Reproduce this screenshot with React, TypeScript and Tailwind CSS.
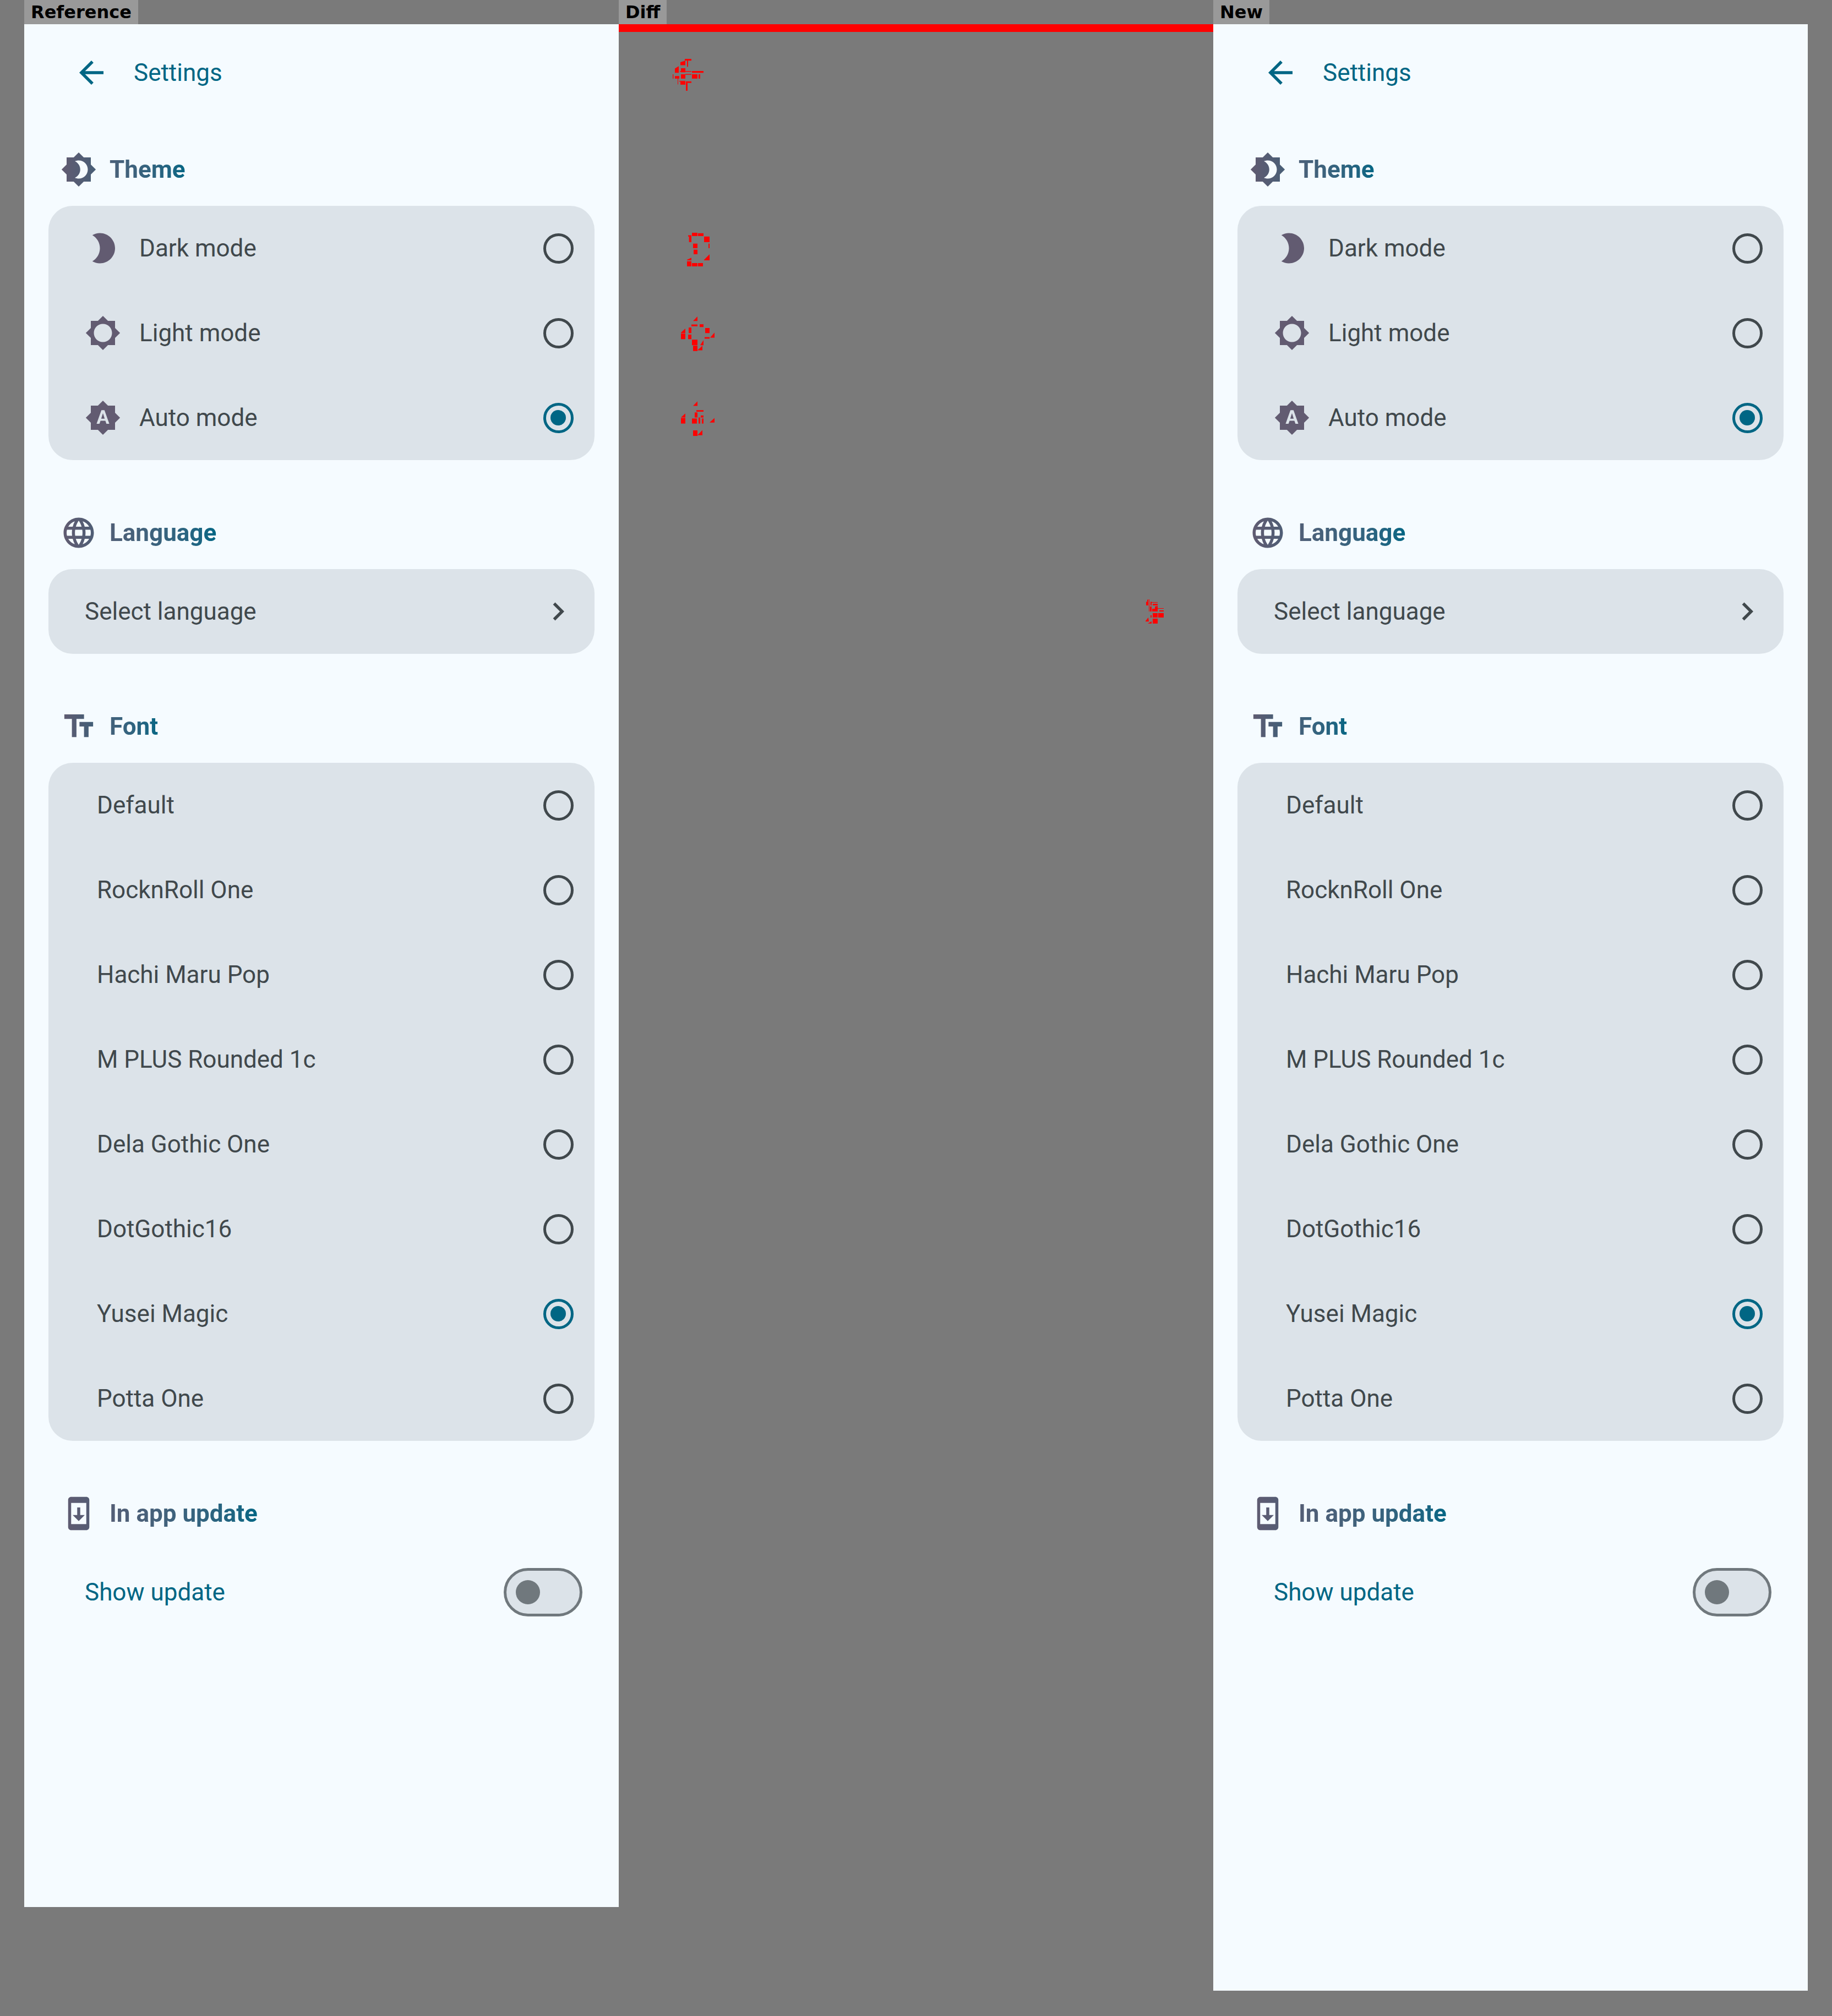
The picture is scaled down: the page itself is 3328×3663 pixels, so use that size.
import React from "react";

const P = {
  b4: "M20 8.69V4h-4.69L12 .69 8.69 4H4v4.69L.69 12 4 15.31V20h4.69L12 23.31 15.31 20H20v-4.69L23.31 12 20 8.69zM12 18c-.89 0-1.74-.2-2.5-.55C11.56 16.5 13 14.42 13 12s-1.44-4.5-3.5-5.45C10.26 6.2 11.11 6 12 6c3.31 0 6 2.69 6 6s-2.69 6-6 6z",
  b2: "M10 2c-1.82 0-3.53.5-5 1.35C7.99 5.08 10 8.3 10 12s-2.01 6.92-5 8.65C6.47 21.5 8.18 22 10 22c5.52 0 10-4.48 10-10S15.52 2 10 2z",
  b5: "M20 15.31L23.31 12 20 8.69V4h-4.69L12 .69 8.69 4H4v4.69L.69 12 4 15.31V20h4.69L12 23.31 15.31 20H20v-4.69zM12 18c-3.31 0-6-2.69-6-6s2.69-6 6-6 6 2.69 6 6-2.69 6-6 6z",
  auto: "M10.85 12.65h2.3L12 9l-1.15 3.65zM20 8.69V4h-4.69L12 .69 8.69 4H4v4.69L.69 12 4 15.31V20h4.69L12 23.31 15.31 20H20v-4.69L23.31 12 20 8.69zM14.3 16l-.7-2h-3.2l-.7 2H7.8L11 7h2l3.2 9h-1.9z",
  globe: "M11.99 2C6.47 2 2 6.48 2 12s4.47 10 9.99 10C17.52 22 22 17.52 22 12S17.52 2 11.99 2zm6.93 6h-2.95c-.32-1.25-.78-2.45-1.38-3.56 1.84.63 3.37 1.91 4.33 3.56zM12 4.04c.83 1.2 1.48 2.53 1.91 3.96h-3.82c.43-1.43 1.08-2.76 1.91-3.96zM4.26 14C4.1 13.36 4 12.69 4 12s.1-1.36.26-2h3.38c-.08.66-.14 1.32-.14 2 0 .68.06 1.34.14 2H4.26zm.82 2h2.95c.32 1.25.78 2.45 1.38 3.56-1.84-.63-3.37-1.9-4.33-3.56zm2.95-8H5.08c.96-1.66 2.49-2.93 4.33-3.56C8.81 5.55 8.35 6.75 8.03 8zM12 19.96c-.83-1.2-1.48-2.53-1.91-3.96h3.82c-.43 1.43-1.08 2.76-1.91 3.96zM14.34 14H9.66c-.09-.66-.16-1.32-.16-2 0-.68.07-1.35.16-2h4.68c.09.65.16 1.32.16 2 0 .68-.07 1.34-.16 2zm.25 5.56c.6-1.11 1.06-2.31 1.38-3.56h2.95c-.96 1.65-2.49 2.93-4.33 3.56zM16.36 14c.08-.66.14-1.32.14-2 0-.68-.06-1.34-.14-2h3.38c.16.64.26 1.31.26 2s-.1 1.36-.26 2h-3.38z",
  tt: "M2.5 4v3h5v12h3V7h5V4h-13zm19 5h-9v3h3v7h3v-7h3V9z",
  sys: "M17 1.01L7 1c-1.1 0-2 .9-2 2v18c0 1.1.9 2 2 2h10c1.1 0 2-.9 2-2V3c0-1.1-.9-1.99-2-1.99zM17 19H7V5h10v14zm-1-6h-3V8h-2v5H8l4 4 4-4z",
  back: "M20 11H7.83l5.59-5.59L12 4l-8 8 8 8 1.41-1.41L7.83 13H20v-2z",
  chev: "M8.59 16.59 13.17 12 8.59 7.41 10 6l6 6-6 6-1.41-1.41z",
};

function Icon({ d, className }: { d: string; className: string }) {
  return (
    <svg viewBox="0 0 24 24" className={`w-[66px] h-[66px] shrink-0 fill-current ${className}`}>
      <path d={d} />
    </svg>
  );
}

function Radio({ on }: { on?: boolean }) {
  return on ? (
    <div className="w-[55px] h-[55px] rounded-full border-[5.5px] border-[#006684] flex items-center justify-center">
      <div className="w-[27.5px] h-[27.5px] rounded-full bg-[#006684]" />
    </div>
  ) : (
    <div className="w-[55px] h-[55px] rounded-full border-[5.5px] border-[#40484c]" />
  );
}

function Heading({ d, label, w, id }: { d: string; label: string; w: number; id: string }) {
  return (
    <div className="h-[132px] pl-[66px] flex items-center">
      <div className="flex items-center gap-[23px] w-fit bg-gradient-to-r from-[#625b71] to-[#006684] bg-clip-text text-transparent">
        <svg viewBox="0 0 24 24" className="w-[66px] h-[66px] shrink-0">
          <defs>
            <linearGradient id={id} gradientUnits="userSpaceOnUse" x1="0" y1="0" x2={(w / 66) * 24} y2="0">
              <stop offset="0" stopColor="#625b71" />
              <stop offset="1" stopColor="#006684" />
            </linearGradient>
          </defs>
          <path d={d} fill={`url(#${id})`} />
        </svg>
        <span className="text-[44px] leading-[66px] font-bold" >{label}</span>
      </div>
    </div>
  );
}

function Row({ icon, label, on }: { icon?: string; label: string; on?: boolean }) {
  return (
    <div className={`h-[154px] flex items-center pr-[38.5px] ${icon ? "pl-[66px]" : "pl-[88px]"}`}>
      {icon && <Icon d={icon} className="text-[#625b71] mr-[33px]" />}
      <span className="flex-1 text-[44px] leading-[66px] text-[#40484c]">{label}</span>
      <Radio on={on} />
    </div>
  );
}

const fonts = ["Default", "RocknRoll One", "Hachi Maru Pop", "M PLUS Rounded 1c", "Dela Gothic One", "DotGothic16", "Yusei Magic", "Potta One"];

function Panel({ h, pre }: { h: string; pre: string }) {
  return (
    <div className={`w-[1080px] bg-[#f5fbff] ${h}`} >
      <div className="h-[176px] flex items-center pl-[89px]">
        <Icon d={P.back} className="text-[#006684] mr-[44px]" />
        <span className="text-[44px] leading-[66px] text-[#006684]">Settings</span>
      </div>
      <div className="h-[22px]" />
      <Heading d={P.b4} label="Theme" w={240} id={`${pre}a`} />
      <div className="mx-[44px] rounded-[44px] bg-[#dce3e9]">
        <Row icon={P.b2} label="Dark mode" />
        <Row icon={P.b5} label="Light mode" />
        <Row icon={P.auto} label="Auto mode" on />
      </div>
      <div className="h-[66px]" />
      <Heading d={P.globe} label="Language" w={305} id={`${pre}b`} />
      <div className="mx-[44px] rounded-[44px] bg-[#dce3e9] h-[154px] flex items-center pl-[66px] pr-[33px]">
        <span className="flex-1 text-[44px] leading-[66px] text-[#40484c]">Select language</span>
        <Icon d={P.chev} className="text-[#40484c]" />
      </div>
      <div className="h-[66px]" />
      <Heading d={P.tt} label="Font" w={185} id={`${pre}c`} />
      <div className="mx-[44px] rounded-[44px] bg-[#dce3e9]">
        {fonts.map((f) => (
          <Row key={f} label={f} on={f === "Yusei Magic"} />
        ))}
      </div>
      <div className="h-[66px]" />
      <Heading d={P.sys} label="In app update" w={387} id={`${pre}d`} />
      <div className="mx-[44px] h-[154px] flex items-center pl-[66px] pr-[22px]">
        <span className="flex-1 text-[44px] leading-[66px] text-[#006684]">Show update</span>
        <div className="w-[143px] h-[88px] rounded-full border-[5.5px] border-[#70787d] bg-[#dce3e9] flex items-center pl-[16.5px]">
          <div className="w-[44px] h-[44px] rounded-full bg-[#70787d]" />
        </div>
      </div>
    </div>
  );
}

function Tab({ children }: { children: React.ReactNode }) {
  return (
    <div className="h-[44px] w-fit px-[12px] bg-[#999999] text-black font-bold text-[32px] leading-[44px] [font-family:'DejaVu_Sans',sans-serif]">
      {children}
    </div>
  );
}

type R = [number, number, number, number];
const blobRects: R[] = [
  [192,37,228,44],[204,44,210,68],[171,74,195,90],[165,85,228,88],[231,85,294,92],[126,98,130,115],[138,105,162,115],[171,98,195,115],[195,97,228,100],[231,98,261,115],[267,98,276,115],[153,115,156,138],[162,124,195,127],[168,127,195,139],[198,126,228,132],[198,132,207,163],
  [231,725,261,738],[264,727,294,738],[210,735,228,740],[215,740,228,762],[297,740,327,762],[237,768,261,786],[321,768,327,786],[240,792,261,810],[204,838,228,858],[231,845,261,858],[264,845,291,858],
  [228,1088,261,1095],[273,1087,294,1098],[213,1100,228,1122],[303,1102,327,1122],[171,1124,195,1146],[210,1128,228,1146],[231,1148,261,1170],[237,1172,261,1193],[300,1138,327,1144],
  [255,1427,294,1433],[246,1436,261,1456],[279,1448,294,1456],[231,1460,258,1480],[267,1456,276,1480],[285,1460,294,1480],[171,1458,195,1480],[237,1507,261,1529],
];
const blobTris: string[] = [
  "168,50 195,44 195,62 168,62","138,75 159,66 159,92 138,92","297,832 327,810 327,834 297,834","204,832 228,824 228,834 204,834",
  "237,1074 261,1056 261,1074","171,1120 195,1104 195,1122 171,1122","330,1140 354,1120 354,1140","276,1170 294,1150 294,1170 276,1170","261,1190 288,1172 288,1190",
  "237,1410 261,1392 261,1410","171,1456 195,1440 195,1456","327,1476 354,1458 354,1476","261,1526 288,1506 288,1526",
];
const chevRects: R[] = [
  [126,40,138,60],[141,27,144,93],[150,40,156,60],[156,42,189,45],[162,51,189,60],[147,66,156,93],[159,78,189,93],[189,75,222,78],[198,87,222,93],[162,102,189,126],[192,102,222,126],[150,114,156,126],[162,132,189,159],
];
const chevTris: string[] = ["132,30 138,27 138,40 132,40","174,66 189,63 189,78 174,78","123,145 138,126 141,148 123,148","135,159 156,147 156,159"];

function DiffPanel() {
  return (
    <div className="w-[1080px] relative">
      <div className="h-[14px] bg-[#ff0000]" />
      <svg viewBox="0 0 480 1568" preserveAspectRatio="none" className="absolute left-[56px] top-[46px] w-[160px] h-[720px] fill-[#ff0000]">
        {blobRects.map((r, i) => (
          <rect key={i} x={r[0]} y={r[1]} width={r[2] - r[0]} height={r[3] - r[1]} />
        ))}
        {blobTris.map((p, i) => (
          <polygon key={i} points={p} />
        ))}
      </svg>
      <svg viewBox="0 0 360 240" preserveAspectRatio="none" className="absolute left-[916px] top-[1036px] w-[120px] h-[80px] fill-[#ff0000]">
        {chevRects.map((r, i) => (
          <rect key={i} x={r[0]} y={r[1]} width={r[2] - r[0]} height={r[3] - r[1]} />
        ))}
        {chevTris.map((p, i) => (
          <polygon key={i} points={p} />
        ))}
      </svg>
    </div>
  );
}

export default function App() {
  return (
    <div className="w-[3328px] h-[3663px] bg-[#7a7a7a] px-[44px] flex [font-family:Roboto,sans-serif]">
      <div className="w-[1080px]">
        <Tab>Reference</Tab>
        <Panel h="h-[3421px]" pre="r" />
      </div>
      <div className="w-[1080px]">
        <Tab>Diff</Tab>
        <DiffPanel />
      </div>
      <div className="w-[1080px]">
        <Tab>New</Tab>
        <Panel h="h-[3573px]" pre="n" />
      </div>
    </div>
  );
}
